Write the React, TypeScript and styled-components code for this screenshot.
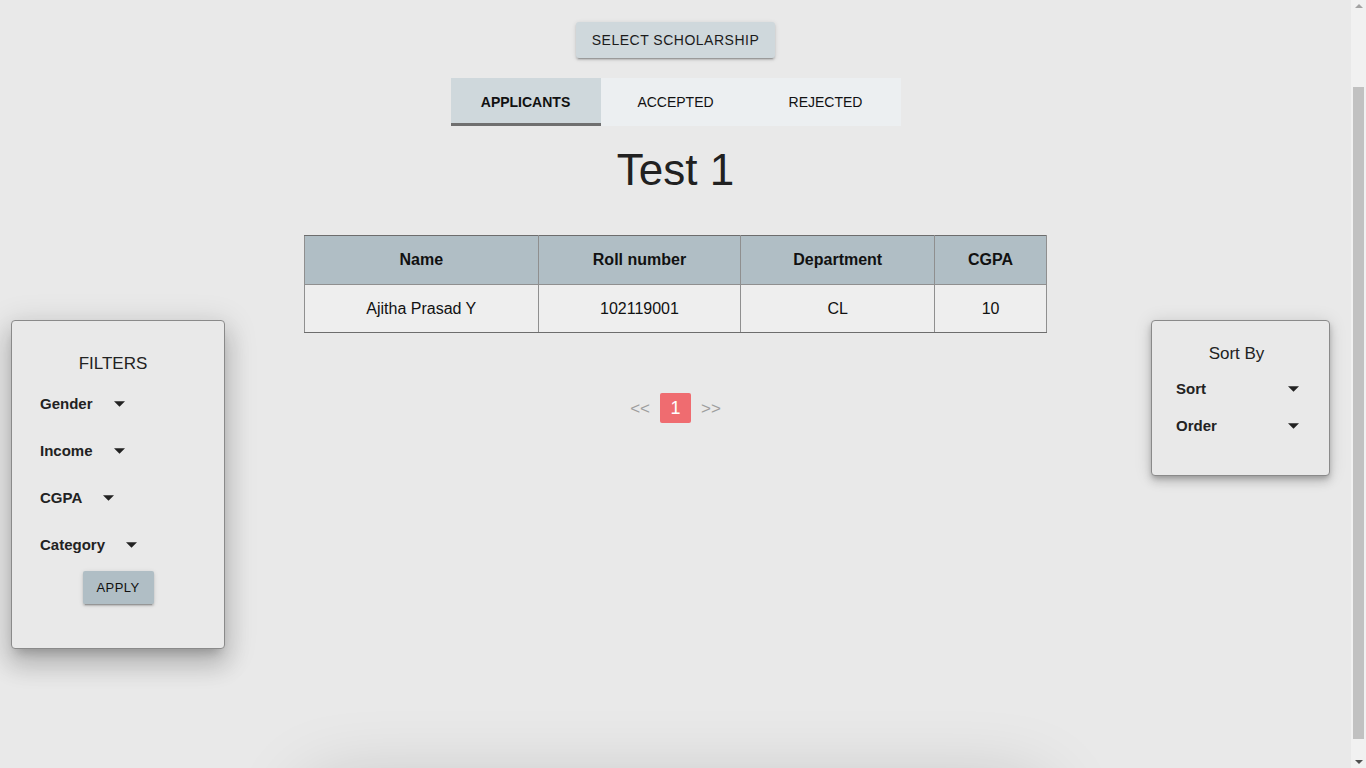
import React from "react";
import styled, { createGlobalStyle } from "styled-components";

const Global = createGlobalStyle`
  html, body { margin: 0; padding: 0; background: #e9e9e9; overflow: hidden; }
  body { font-family: "Liberation Sans", Arial, sans-serif; color: #212121; }
  * { box-sizing: border-box; }
`;

const Viewport = styled.div`
  height: 100vh;
  overflow: hidden;
  padding-right: 15px;
  background: #e9e9e9;
`;

const ScrollTrack = styled.div`
  position: fixed;
  top: 0;
  right: 0;
  width: 15px;
  height: 100vh;
  background: #f1f1f1;
  display: flex;
  flex-direction: column;
  align-items: center;
  justify-content: space-between;
  padding: 4px 0;
`;

const ScrollThumb = styled.div`
  position: absolute;
  left: 2px;
  right: 2px;
  top: 87px;
  height: 652px;
  background: #c1c1c1;
`;

const Arrow = styled.div<{ $down?: boolean }>`
  width: 0;
  height: 0;
  border-left: 4px solid transparent;
  border-right: 4px solid transparent;
  ${p => (p.$down ? "border-top: 4px solid #505050;" : "border-bottom: 4px solid #a3a3a3;")}
`;

const Page = styled.div`
  display: grid;
  grid-template-columns: 1fr 743px 1fr;
  min-height: 880px;
`;

const Main = styled.main`
  display: flex;
  flex-direction: column;
  align-items: center;
  padding-top: 22px;
`;

const SelectButton = styled.button`
  font-family: "Liberation Sans", Arial, sans-serif;
  font-size: 14px;
  letter-spacing: 0.5px;
  text-transform: uppercase;
  color: #1b1b1b;
  background: #cfd8dc;
  border: none;
  border-radius: 3px;
  height: 36px;
  padding: 0 16px;
  box-shadow: 0 3px 1px -2px rgba(0,0,0,.2), 0 2px 2px 0 rgba(0,0,0,.14), 0 1px 5px 0 rgba(0,0,0,.12);
`;

const Tabs = styled.div`
  display: flex;
  margin-top: 20px;
  background: #eceff1;
`;

const Tab = styled.div<{ $active?: boolean }>`
  width: 150px;
  height: 48px;
  display: flex;
  align-items: center;
  justify-content: center;
  font-size: 14px;
  font-weight: ${p => (p.$active ? 700 : 400)};
  color: #111;
  background: ${p => (p.$active ? "#cfd8dc" : "transparent")};
  border-bottom: 3px solid ${p => (p.$active ? "#6f6f6f" : "transparent")};
  padding-top: 3px;
`;

const Title = styled.h1`
  margin: 19px 0 0;
  font-size: 44px;
  font-weight: 400;
  line-height: normal;
  color: #212121;
`;

const Table = styled.table`
  margin-top: 40px;
  width: 743px;
  border-collapse: collapse;
  border: 1px solid #6d6d6d;
`;

const Th = styled.th<{ $w: number }>`
  width: ${p => p.$w}px;
  height: 49px;
  background: #b0bec5;
  font-size: 16px;
  font-weight: 700;
  color: #111;
  border: 1px solid #8f8f8f;
  border-top-color: #6d6d6d;
`;

const Td = styled.td`
  height: 48px;
  background: #eeeeee;
  text-align: center;
  font-size: 16px;
  color: #111;
  border: 1px solid #8f8f8f;
  border-bottom-color: #6d6d6d;
`;

const Pager = styled.div`
  margin-top: 60px;
  display: flex;
  align-items: center;
  gap: 10px;
`;

const PagerArrow = styled.span`
  font-size: 17px;
  color: #9e9e9e;
  padding-top: 2px;
`;

const PageNum = styled.span`
  width: 31px;
  height: 30px;
  display: flex;
  align-items: center;
  justify-content: center;
  background: #ef6c70;
  color: #fff;
  font-size: 18px;
  border-radius: 2px;
`;

const BottomCard = styled.div`
  margin-top: 355px;
  width: 730px;
  height: 80px;
  background: #e9e9e9;
  box-shadow: 0 10px 80px 0 rgba(0,0,0,.2);
`;

const Panel = styled.aside<{ $side: "left" | "right" }>`
  margin-top: 320px;
  align-self: start;
  justify-self: ${p => (p.$side === "left" ? "start" : "end")};
  margin-left: ${p => (p.$side === "left" ? "11px" : "0")};
  margin-right: ${p => (p.$side === "right" ? "21px" : "0")};
  background: #e9e9e9;
  border: 1px solid #8a8a8a;
  border-radius: 4px;
  display: flex;
  flex-direction: column;
`;

const FilterPanel = styled(Panel)`
  width: 214px;
  height: 329px;
  padding: 33px 28px 0;
  box-shadow: 0 8px 10px -5px rgba(0,0,0,.2), 0 16px 24px 2px rgba(0,0,0,.14), 0 6px 30px 5px rgba(0,0,0,.12);
`;

const SortPanel = styled(Panel)`
  width: 179px;
  height: 156px;
  padding: 23px 30px 0 24px;
  box-shadow: 0 3px 5px -1px rgba(0,0,0,.2), 0 6px 10px 0 rgba(0,0,0,.14), 0 1px 18px 0 rgba(0,0,0,.12);
`;

const PanelTitle = styled.div<{ $shift?: number }>`
  font-size: 17px;
  line-height: 20px;
  text-align: center;
  color: #222;
  margin-bottom: 6px;
  padding-right: ${p => p.$shift ?? 0}px;
`;

const SelectRow = styled.div<{ $h: number; $spread?: boolean }>`
  height: ${p => p.$h}px;
  display: flex;
  align-items: center;
  justify-content: ${p => (p.$spread ? "space-between" : "flex-start")};
  gap: 21px;
  font-size: 15px;
  font-weight: 700;
  color: #222;
`;

const ApplyButton = styled.button`
  align-self: center;
  margin-top: 3px;
  width: 71px;
  height: 33px;
  border: none;
  border-radius: 2px;
  background: #b0bec5;
  font-family: "Liberation Sans", Arial, sans-serif;
  font-size: 13px;
  letter-spacing: 0.4px;
  color: #111;
  box-shadow: 0 3px 1px -2px rgba(0,0,0,.2), 0 2px 2px 0 rgba(0,0,0,.14), 0 1px 5px 0 rgba(0,0,0,.12);
`;

const Caret = () => (
  <svg width="11" height="6" viewBox="0 0 10 5" aria-hidden="true">
    <path d="M0 0 L10 0 L5 5 Z" fill="#222" />
  </svg>
);

const columns = [
  { label: "Name", w: 234 },
  { label: "Roll number", w: 203 },
  { label: "Department", w: 194 },
  { label: "CGPA", w: 112 },
];

const rows = [["Ajitha Prasad Y", "102119001", "CL", "10"]];

export default function App() {
  return (
    <>
      <Global />
      <Viewport>
        <Page>
          <FilterPanel $side="left">
            <PanelTitle $shift={10}>FILTERS</PanelTitle>
            {["Gender", "Income", "CGPA", "Category"].map(f => (
              <SelectRow key={f} $h={47}>
                <span>{f}</span>
                <Caret />
              </SelectRow>
            ))}
            <ApplyButton>APPLY</ApplyButton>
          </FilterPanel>
          <Main>
            <SelectButton>Select Scholarship</SelectButton>
            <Tabs>
              <Tab $active>APPLICANTS</Tab>
              <Tab>ACCEPTED</Tab>
              <Tab>REJECTED</Tab>
            </Tabs>
            <Title>Test 1</Title>
            <Table>
              <thead>
                <tr>
                  {columns.map(c => (
                    <Th key={c.label} $w={c.w}>{c.label}</Th>
                  ))}
                </tr>
              </thead>
              <tbody>
                {rows.map(r => (
                  <tr key={r[1]}>
                    {r.map((v, i) => (
                      <Td key={i}>{v}</Td>
                    ))}
                  </tr>
                ))}
              </tbody>
            </Table>
            <Pager>
              <PagerArrow>&lt;&lt;</PagerArrow>
              <PageNum>1</PageNum>
              <PagerArrow>&gt;&gt;</PagerArrow>
            </Pager>
            <BottomCard />
          </Main>
          <SortPanel $side="right">
            <PanelTitle $shift={2}>Sort By</PanelTitle>
            {["Sort", "Order"].map(s => (
              <SelectRow key={s} $h={37} $spread>
                <span>{s}</span>
                <Caret />
              </SelectRow>
            ))}
          </SortPanel>
        </Page>
      </Viewport>
      <ScrollTrack>
        <Arrow />
        <ScrollThumb />
        <Arrow $down />
      </ScrollTrack>
    </>
  );
}
